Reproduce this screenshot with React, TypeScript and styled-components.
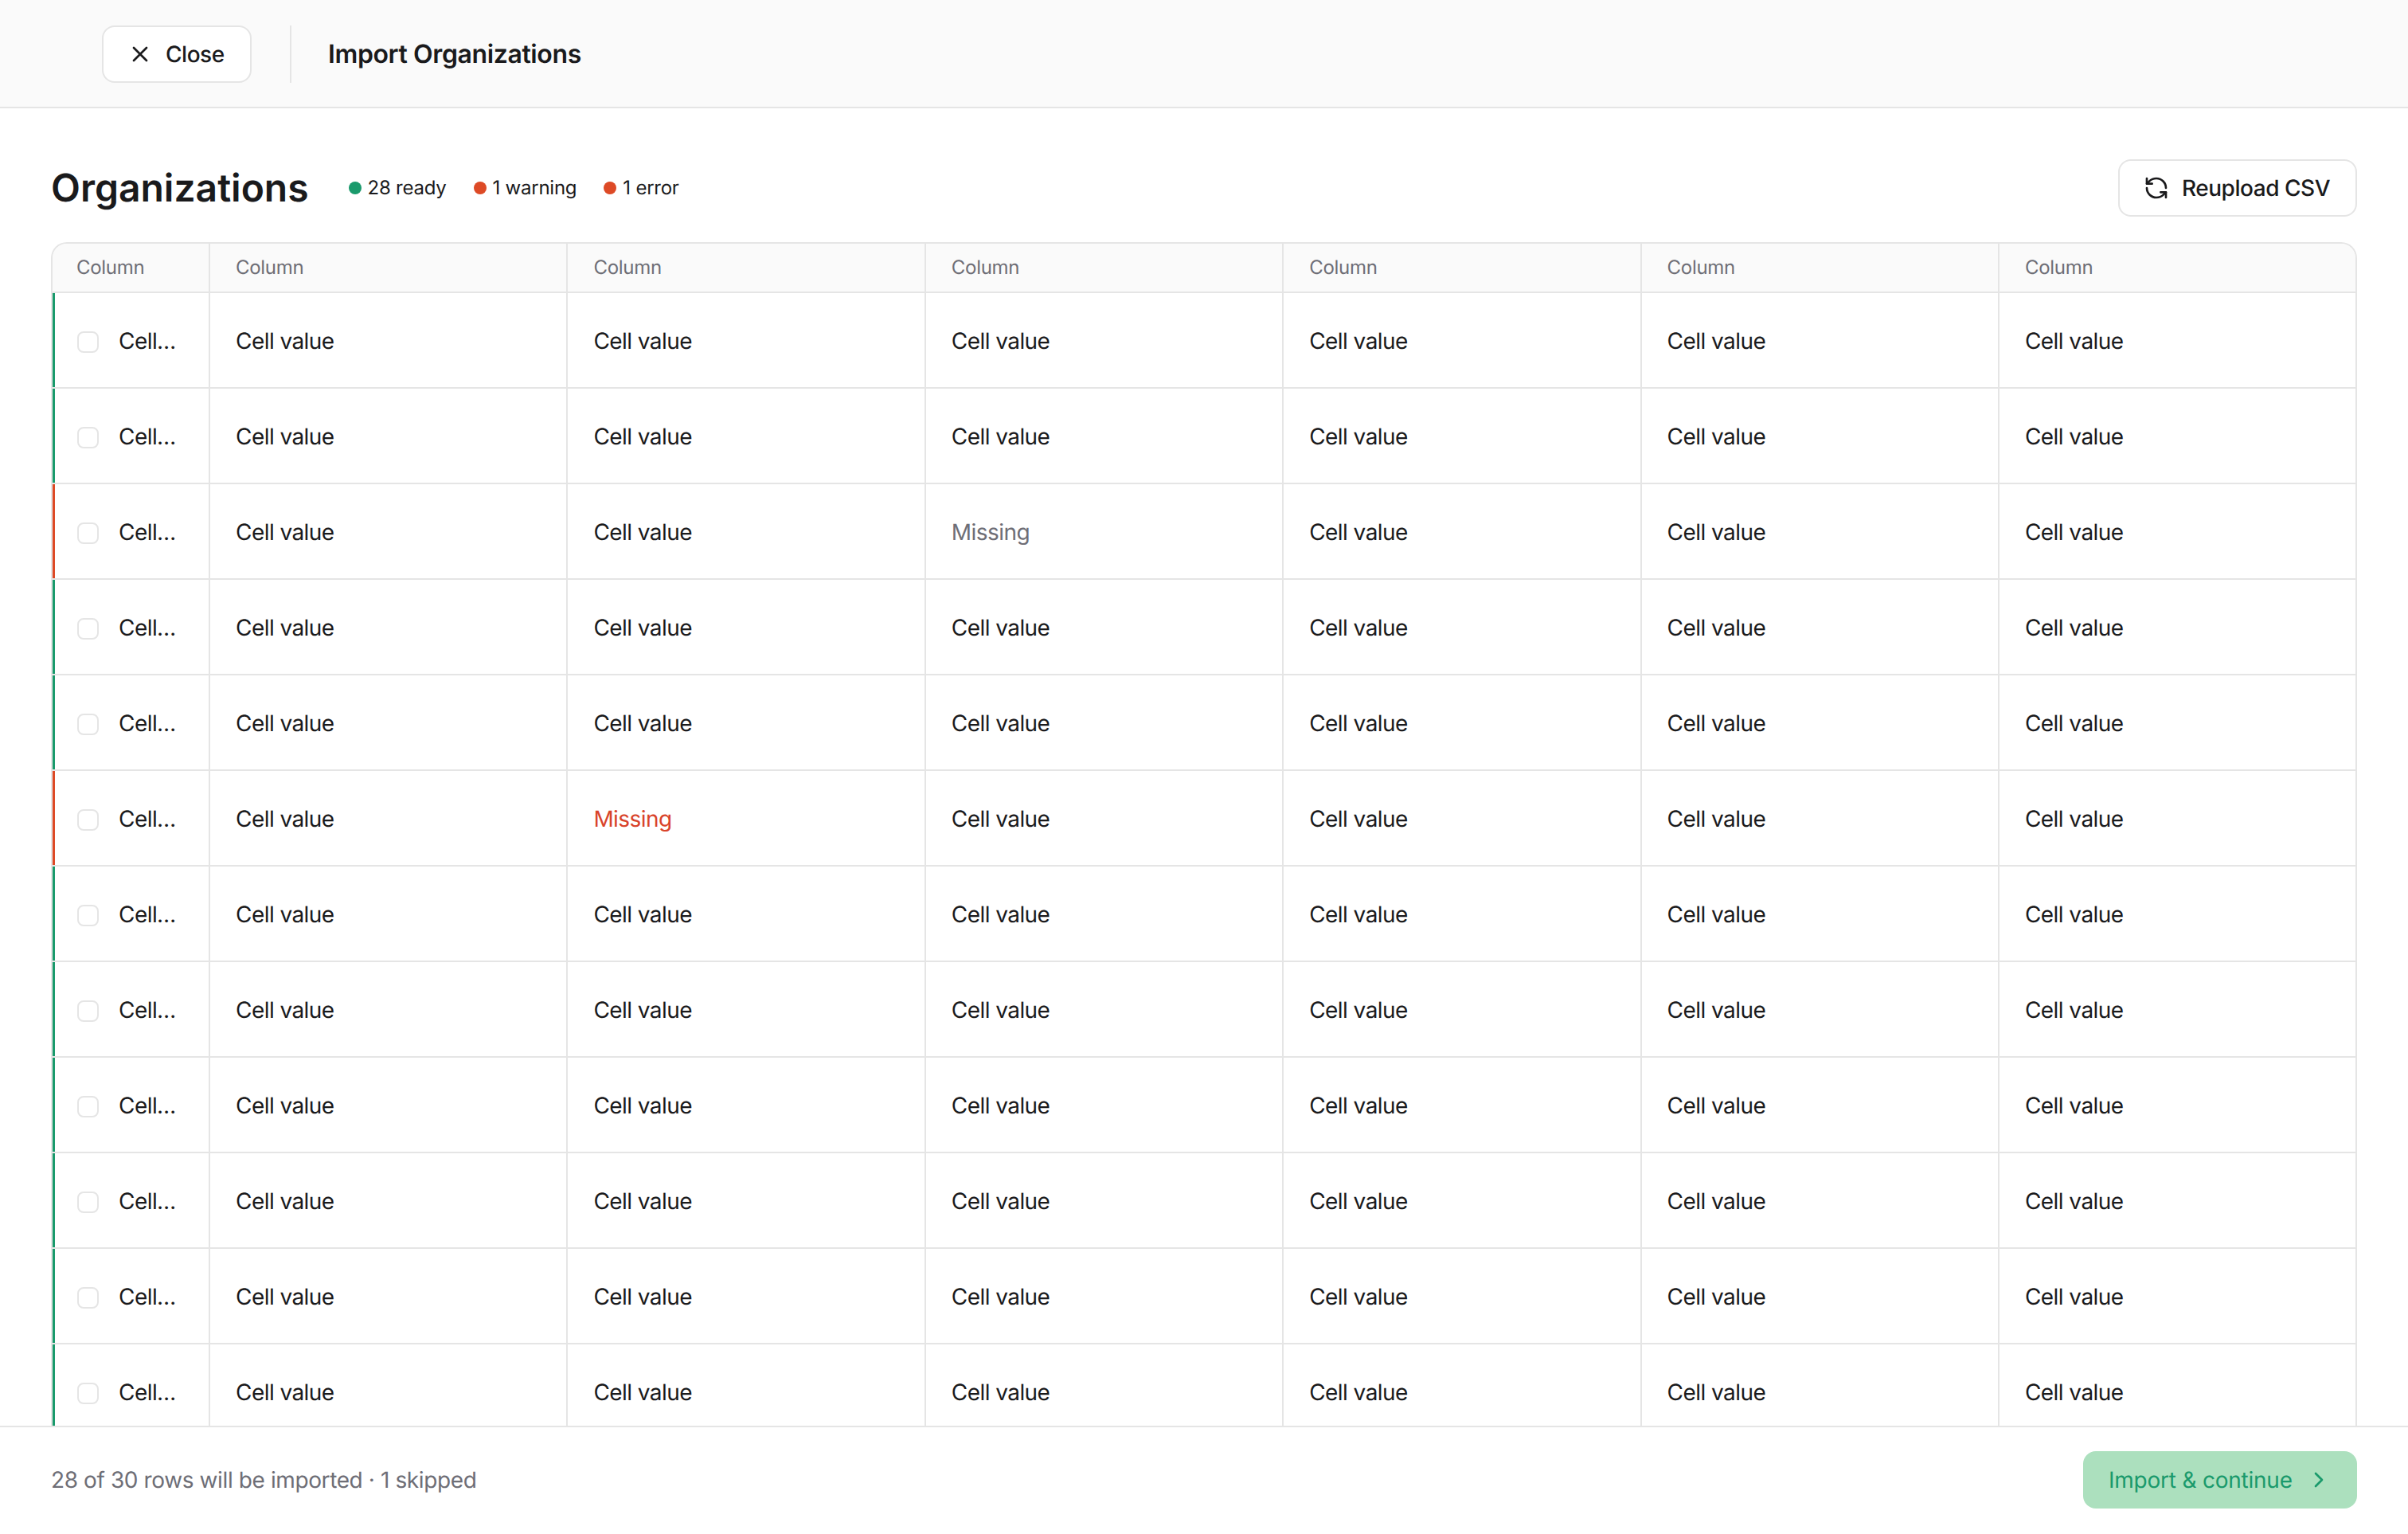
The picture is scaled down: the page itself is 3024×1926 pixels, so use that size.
import React from "react";
import styled, { createGlobalStyle } from "styled-components";
import { X, RefreshCcw, ChevronRight } from "lucide-react";

const GREEN = "#1a9a6c";
const RED = "#dd4a26";
const LINE = "#e5e5e5";
const INK = "#1a1a1c";
const MUTED = "#6e6e76";

const Global = createGlobalStyle`
  * { box-sizing: border-box; }
  html, body { margin: 0; padding: 0; background: #fff; }
  body {
    font-family: Inter, "Liberation Sans", sans-serif;
    color: ${INK};
    text-rendering: geometricPrecision;
  }
`;

const Page = styled.div`
  display: flex;
  flex-direction: column;
  height: 100vh;
  overflow: hidden;
`;

const TopBar = styled.header`
  flex: none;
  display: flex;
  align-items: center;
  gap: 48px;
  height: 136px;
  padding: 2px 0 0 128px;
  background: #fafafa;
  border-bottom: 2px solid ${LINE};
`;

const Button = styled.button`
  display: inline-flex;
  align-items: center;
  justify-content: flex-start;
  gap: 16px;
  height: 72px;
  padding: 0 30px;
  border: 2px solid ${LINE};
  border-radius: 16px;
  background: #fff;
  color: ${INK};
  font: 500 28px/1 Inter, sans-serif;
  letter-spacing: -0.017em;
  text-rendering: geometricPrecision;
  white-space: nowrap;
  svg { flex: none; }
`;

const CloseButton = styled(Button)`
  width: 188px;
`;

const Divider = styled.span`
  width: 2px;
  height: 72px;
  background: ${LINE};
`;

const PageTitle = styled.h1`
  margin: 0 0 0 -2px;
  font: 600 32px/1 Inter, sans-serif;
  letter-spacing: -0.012em;
  color: ${INK};
`;

const Main = styled.main`
  flex: 1;
  min-height: 0;
  display: flex;
  flex-direction: column;
  padding: 64px 64px 0;
  overflow: hidden;
`;

const TitleRow = styled.div`
  flex: none;
  display: flex;
  align-items: center;
  height: 72px;
  margin-bottom: 32px;
`;

const Heading = styled.h2`
  margin: 0 50px 0 0;
  font: 600 48px/1 Inter, sans-serif;
  color: ${INK};
`;

const Chips = styled.div`
  display: flex;
  align-items: center;
  gap: 34px;
  flex: 1;
`;

const Chip = styled.span`
  display: inline-flex;
  align-items: center;
  gap: 8px;
  font: 400 24px/1 Inter, sans-serif;
  letter-spacing: -0.01em;
  color: ${INK};
`;

const Dot = styled.i<{ $color: string }>`
  width: 16px;
  height: 16px;
  border-radius: 50%;
  background: ${(p) => p.$color};
`;

const ReuploadButton = styled(Button)`
  width: 300px;
`;

const TableFrame = styled.div`
  flex: 1;
  min-height: 0;
  border: 2px solid ${LINE};
  border-bottom: 0;
  border-radius: 20px 20px 0 0;
  overflow: hidden;
`;

const Grid = styled.div`
  display: grid;
  grid-template-columns: 198px repeat(6, 449.4px);
`;

const HeadRow = styled(Grid)`
  height: 62px;
  background: #fafafa;
  border-bottom: 2px solid ${LINE};
`;

const HeadCell = styled.div<{ $first?: boolean }>`
  display: flex;
  align-items: center;
  padding-left: ${(p) => (p.$first ? 30 : 32)}px;
  border-right: 2px solid ${LINE};
  font: 400 24px/1 Inter, sans-serif;
  letter-spacing: -0.012em;
  color: ${MUTED};
`;

const BodyRow = styled(Grid)`
  height: 120px;
  border-bottom: 2px solid ${LINE};
`;

const Cell = styled.div<{ $tone?: "muted" | "error" }>`
  display: flex;
  align-items: center;
  padding: 2px 32px 0;
  border-right: 2px solid ${LINE};
  font: 400 28px/1 Inter, sans-serif;
  letter-spacing: -0.02em;
  color: ${(p) => (p.$tone === "muted" ? MUTED : p.$tone === "error" ? "#d9432a" : INK)};
`;

const SelectCell = styled(Cell)<{ $accent: string }>`
  gap: 25px;
  padding: 2px 40px 0 28px;
  border-left: 3px solid ${(p) => p.$accent};
`;

const Check = styled.span`
  flex: none;
  width: 27px;
  height: 27px;
  margin-top: 3px;
  border: 2px solid ${LINE};
  border-radius: 8px;
  background: #fff;
`;

const Clip = styled.span`
  min-width: 0;
  overflow: hidden;
  white-space: nowrap;
  text-overflow: ellipsis;
  line-height: 34px;
`;

const Footer = styled.footer`
  flex: none;
  display: flex;
  align-items: center;
  justify-content: space-between;
  height: 136px;
  padding: 0 64px 2px;
  background: #fff;
  border-top: 2px solid ${LINE};
`;

const Summary = styled.span`
  font: 400 28px/1 Inter, sans-serif;
  letter-spacing: -0.014em;
  color: ${MUTED};
`;

const ImportButton = styled(Button)`
  width: 344px;
  padding: 0 32px;
  border: 0;
  justify-content: space-between;
  font-weight: 400;
  letter-spacing: -0.008em;
  background: #ace0be;
  color: ${GREEN};
`;

const rows = Array.from({ length: 12 }, (_, i) => i);
const columns = [0, 1, 2, 3, 4, 5];

function valueFor(row: number, col: number): { text: string; tone?: "muted" | "error" } {
  if (row === 2 && col === 2) return { text: "Missing", tone: "muted" };
  if (row === 5 && col === 1) return { text: "Missing", tone: "error" };
  return { text: "Cell value" };
}

export default function App() {
  return (
    <Page>
      <Global />
      <TopBar>
        <CloseButton>
          <X size={32} strokeWidth={2} />
          Close
        </CloseButton>
        <Divider />
        <PageTitle>Import Organizations</PageTitle>
      </TopBar>
      <Main>
        <TitleRow>
          <Heading>Organizations</Heading>
          <Chips>
            <Chip><Dot $color={GREEN} />28 ready</Chip>
            <Chip><Dot $color={RED} />1 warning</Chip>
            <Chip><Dot $color={RED} />1 error</Chip>
          </Chips>
          <ReuploadButton>
            <RefreshCcw size={32} strokeWidth={2} />
            Reupload CSV
          </ReuploadButton>
        </TitleRow>
        <TableFrame>
          <HeadRow>
            <HeadCell $first>Column</HeadCell>
            {columns.map((c) => <HeadCell key={c}>Column</HeadCell>)}
          </HeadRow>
          {rows.map((r) => (
            <BodyRow key={r}>
              <SelectCell $accent={r === 2 || r === 5 ? RED : GREEN}>
                <Check />
                <Clip>Cell value</Clip>
              </SelectCell>
              {columns.map((c) => {
                const v = valueFor(r, c);
                return <Cell key={c} $tone={v.tone}>{v.text}</Cell>;
              })}
            </BodyRow>
          ))}
        </TableFrame>
      </Main>
      <Footer>
        <Summary>28 of 30 rows will be imported · 1 skipped</Summary>
        <ImportButton>
          Import &amp; continue
          <ChevronRight size={32} strokeWidth={2} />
        </ImportButton>
      </Footer>
    </Page>
  );
}
